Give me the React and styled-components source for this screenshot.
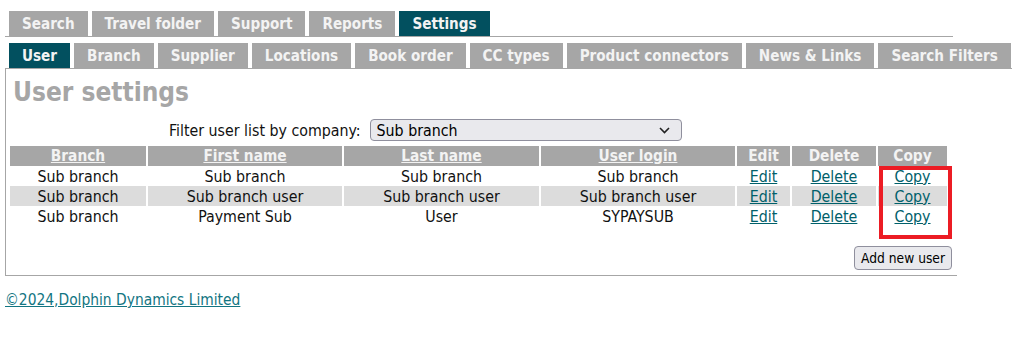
import React from "react";
import styled, { createGlobalStyle } from "styled-components";

const GlobalStyle = createGlobalStyle`
  body {
    margin: 0;
    background: #ffffff;
    font-family: "DejaVu Sans Condensed", "DejaVu Sans", Verdana, sans-serif;
    font-stretch: condensed;
    color: #111111;
  }
`;

const Page = styled.div`
  padding: 11px 0 0 5px;
`;

const TabRow = styled.div`
  display: flex;
  width: ${(p) => (p.$wide ? "max-content" : "948px")};
  margin-top: ${(p) => (p.$wide ? "6px" : "0")};
  padding-right: ${(p) => (p.$wide ? "1px" : "0")};
  border-bottom: 1px solid #a6a6a6;
`;

const Tab = styled.div`
  flex-shrink: 0;
  height: 25px;
  line-height: 26px;
  margin-left: 4px;
  padding: 0 13px;
  font-size: 15.1px;
  font-weight: bold;
  color: #f3f3f3;
  background: ${(p) => (p.$active ? "#02505f" : "#a6a6a6")};
  white-space: nowrap;
`;

const Box = styled.div`
  position: relative;
  width: 944px;
  padding: 0 5px 5px 2px;
  border-left: 1px solid #a6a6a6;
  border-bottom: 1px solid #a6a6a6;
`;

const Title = styled.h2`
  margin: 0;
  padding: 8px 0 0 5px;
  font-size: 26px;
  line-height: 30px;
  font-weight: bold;
  color: #a6a6a6;
`;

const FilterRow = styled.div`
  display: flex;
  align-items: center;
  gap: 9px;
  margin-top: 12px;
  padding-left: 161px;
  font-size: 15.8px;
`;

const SelectWrap = styled.div`
  position: relative;
  width: 312px;
  height: 22px;
`;

const Select = styled.select`
  appearance: none;
  width: 100%;
  height: 100%;
  padding: 0 24px 0 6px;
  border: 1px solid #8f8f9d;
  border-radius: 4px;
  background: #e9e9ed;
  font-family: inherit;
  font-stretch: condensed;
  font-size: 15.8px;
  color: #000000;
`;

const Chevron = styled.svg`
  position: absolute;
  right: 12px;
  top: 8px;
  pointer-events: none;
`;

const TableWrap = styled.div`
  position: relative;
  margin-top: 5px;
`;

const Table = styled.table`
  table-layout: fixed;
  width: 941px;
  border-collapse: separate;
  border-spacing: 2px 0;
  font-size: 15.8px;
`;

const Th = styled.th`
  height: 20px;
  padding: 0;
  background: #a6a6a6;
  color: #f3f3f3;
  font-weight: bold;
  font-size: 15.3px;
  text-align: center;
  a {
    color: #f3f3f3;
  }
`;

const Tr = styled.tr`
  background: ${(p) => (p.$alt ? "#dcdcdc" : "transparent")};
`;

const Td = styled.td`
  height: 20px;
  padding: 0;
  text-align: center;
  white-space: nowrap;
  line-height: 19px;
`;

const Action = styled.a`
  color: #00606a;
  text-decoration: underline;
`;

const Highlight = styled.div`
  position: absolute;
  left: 871px;
  top: 20px;
  width: 65px;
  height: 65px;
  border: 4px solid #ec1c24;
  pointer-events: none;
`;

const ButtonRow = styled.div`
  display: flex;
  justify-content: flex-end;
  margin-top: 20px;
`;

const Button = styled.button`
  height: 24px;
  padding: 0 6px;
  border: 1px solid #8f8f9d;
  border-radius: 4px;
  background: #e9e9ed;
  font-family: inherit;
  font-stretch: condensed;
  font-size: 13.7px;
  color: #000000;
`;

const Footer = styled.a`
  display: inline-block;
  margin-top: 15px;
  font-size: 15.4px;
  color: #127582;
  text-decoration: underline;
`;

const topTabs = ["Search", "Travel folder", "Support", "Reports", "Settings"];
const subTabs = [
  "User",
  "Branch",
  "Supplier",
  "Locations",
  "Book order",
  "CC types",
  "Product connectors",
  "News & Links",
  "Search Filters",
];

const columns = [
  { label: "Branch", width: 136, sort: true },
  { label: "First name", width: 194, sort: true },
  { label: "Last name", width: 195, sort: true },
  { label: "User login", width: 194, sort: true },
  { label: "Edit", width: 53 },
  { label: "Delete", width: 84 },
  { label: "Copy", width: 69 },
];

const users = [
  ["Sub branch", "Sub branch", "Sub branch", "Sub branch"],
  ["Sub branch", "Sub branch user", "Sub branch user", "Sub branch user"],
  ["Sub branch", "Payment Sub", "User", "SYPAYSUB"],
];

export default function App() {
  return (
    <>
      <GlobalStyle />
      <Page>
        <TabRow>
          {topTabs.map((t) => (
            <Tab key={t} $active={t === "Settings"}>
              {t}
            </Tab>
          ))}
        </TabRow>
        <TabRow $wide>
          {subTabs.map((t) => (
            <Tab key={t} $active={t === "User"}>
              {t}
            </Tab>
          ))}
        </TabRow>
        <Box>
          <Title>User settings</Title>
          <FilterRow>
            <span>Filter user list by company:</span>
            <SelectWrap>
              <Select defaultValue="sub">
                <option value="sub">Sub branch</option>
              </Select>
              <Chevron width="11" height="7" viewBox="0 0 11 7">
                <path d="M1 1l4.5 4.5L10 1" fill="none" stroke="#222" strokeWidth="1.6" />
              </Chevron>
            </SelectWrap>
          </FilterRow>
          <TableWrap>
            <Table>
              <colgroup>
                {columns.map((c) => (
                  <col key={c.label} style={{ width: c.width }} />
                ))}
              </colgroup>
              <thead>
                <tr>
                  {columns.map((c) => (
                    <Th key={c.label}>{c.sort ? <a href="#">{c.label}</a> : c.label}</Th>
                  ))}
                </tr>
              </thead>
              <tbody>
                {users.map((u, i) => (
                  <Tr key={i} $alt={i === 1}>
                    {u.map((v, j) => (
                      <Td key={j}>{v}</Td>
                    ))}
                    <Td>
                      <Action href="#">Edit</Action>
                    </Td>
                    <Td>
                      <Action href="#">Delete</Action>
                    </Td>
                    <Td>
                      <Action href="#">Copy</Action>
                    </Td>
                  </Tr>
                ))}
              </tbody>
            </Table>
            <Highlight />
          </TableWrap>
          <ButtonRow>
            <Button>Add new user</Button>
          </ButtonRow>
        </Box>
        <Footer href="#">©2024,Dolphin Dynamics Limited</Footer>
      </Page>
    </>
  );
}
